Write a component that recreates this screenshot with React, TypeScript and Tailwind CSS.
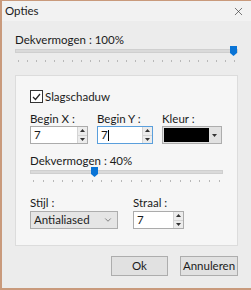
import { ChevronDown, X } from 'lucide-react'

function Ticks({ count, className }: { count: number; className: string }) {
	return (
		<div className={`flex justify-between ${className}`}>
			{Array.from({ length: count }).map((_, i) => (
				<span key={i} className="w-px h-[2px] bg-[#b8b8b8]" />
			))}
		</div>
	)
}

function Thumb() {
	return (
		<svg width="7" height="10" viewBox="0 0 7 10" className="block">
			<path d="M0 0h7v7l-3.5 3L0 7z" fill="#0a74d6" />
		</svg>
	)
}

function Spinner() {
	return (
		<div className="flex flex-col w-[10px] h-full border-l border-[#d4d4d4] bg-[#ececec]">
			<div className="flex-1 flex items-center justify-center border-b border-[#d4d4d4]">
				<svg width="5" height="3" viewBox="0 0 5 3">
					<path d="M0 3L2.5 0 5 3z" fill="#333" />
				</svg>
			</div>
			<div className="flex-1 flex items-center justify-center">
				<svg width="5" height="3" viewBox="0 0 5 3">
					<path d="M0 0h5L2.5 3z" fill="#333" />
				</svg>
			</div>
		</div>
	)
}

export default function App() {
	return (
		<div
			className="w-[251px] h-[290px] bg-[#ececec] border-l-2 border-b-2 border-t border-[#c99a7c] flex flex-col text-[11.5px] text-[#1b1b1b] leading-[12px] overflow-hidden"
			style={{ fontFamily: 'Lato, "Liberation Sans", sans-serif' }}
		>
			<div className="h-[20px] flex items-center justify-between pl-[3px] pr-[6px] bg-[#f2f2f2]">
				<span>Opties</span>
				<X size={13} strokeWidth={1.2} className="text-[#333]" />
			</div>

			<div className="pl-[13px] pr-[13px] flex flex-col">
				<span className="mt-[13px]">Dekvermogen : 100%</span>
				<div className="h-[10px] flex items-center relative">
					<div className="w-full h-[4px] bg-[#dadada] border border-[#cfcfcf]" />
					<div className="absolute right-[1px] top-0">
						<Thumb />
					</div>
				</div>
				<Ticks count={25} className="mt-[4px] px-[3px]" />

				<div className="mt-[13px] h-[171px] bg-[#f6f6f6] border border-[#dcdcdc] px-[14px] flex flex-col">
					<div className="mt-[14px] flex items-center gap-[2px]">
						<div className="w-[13px] h-[13px] border border-[#333] bg-white flex items-center justify-center">
							<svg width="9" height="8" viewBox="0 0 9 8">
								<path d="M1 4l2.5 2.5L8 1" stroke="#222" strokeWidth="1.2" fill="none" />
							</svg>
						</div>
						<span>Slagschaduw</span>
					</div>

					<div className="mt-[10px] flex gap-[9px]">
						<div className="flex flex-col gap-[1px]">
							<span>Begin X :</span>
							<div className="w-[58px] h-[18px] bg-white border border-[#ababab] flex items-center justify-between pl-[3px]">
								<span>7</span>
								<Spinner />
							</div>
						</div>
						<div className="flex flex-col gap-[1px]">
							<span>Begin Y :</span>
							<div className="w-[56px] h-[18px] bg-white border border-[#5a9fdc] flex items-center justify-between pl-[3px]">
								<span className="flex items-center">
									7<span className="w-px h-[11px] bg-black" />
								</span>
								<Spinner />
							</div>
						</div>
						<div className="flex flex-col gap-[1px]">
							<span>Kleur :</span>
							<div className="w-[60px] h-[18px] bg-[#e1e1e1] border border-[#adadad] flex items-center p-[1px]">
								<div className="w-[45px] h-full bg-black" />
								<div className="flex-1 flex items-center justify-center">
									<svg width="5" height="3" viewBox="0 0 5 3">
										<path d="M0 0h5L2.5 3z" fill="#333" />
									</svg>
								</div>
							</div>
						</div>
					</div>

					<span className="mt-[11px]">Dekvermogen : 40%</span>
					<div className="h-[10px] flex items-center relative">
						<div className="w-full h-[4px] bg-[#dadada] border border-[#cfcfcf]" />
						<div className="absolute left-[61px] top-0">
							<Thumb />
						</div>
					</div>
					<Ticks count={20} className="mt-[3px] px-[3px]" />

					<div className="mt-[15px] flex gap-[15px]">
						<div className="flex flex-col gap-[2px]">
							<span>Stijl :</span>
							<div className="w-[88px] h-[18px] bg-[#e5e5e5] border border-[#adadad] flex items-center justify-between pl-[3px] pr-[4px]">
								<span>Antialiased</span>
								<ChevronDown size={10} strokeWidth={1.5} className="text-[#444]" />
							</div>
						</div>
						<div className="flex flex-col gap-[2px]">
							<span>Straal :</span>
							<div className="w-[51px] h-[18px] bg-white border border-[#ababab] flex items-center justify-between pl-[3px]">
								<span>7</span>
								<Spinner />
							</div>
						</div>
					</div>
				</div>

				<div className="mt-[10px] flex justify-end gap-[12px]">
					<button className="w-[57px] h-[20px] bg-[#e1e1e1] border border-[#adadad]">Ok</button>
					<button className="w-[58px] h-[20px] bg-[#e1e1e1] border border-[#adadad]">Annuleren</button>
				</div>
			</div>
		</div>
	)
}
